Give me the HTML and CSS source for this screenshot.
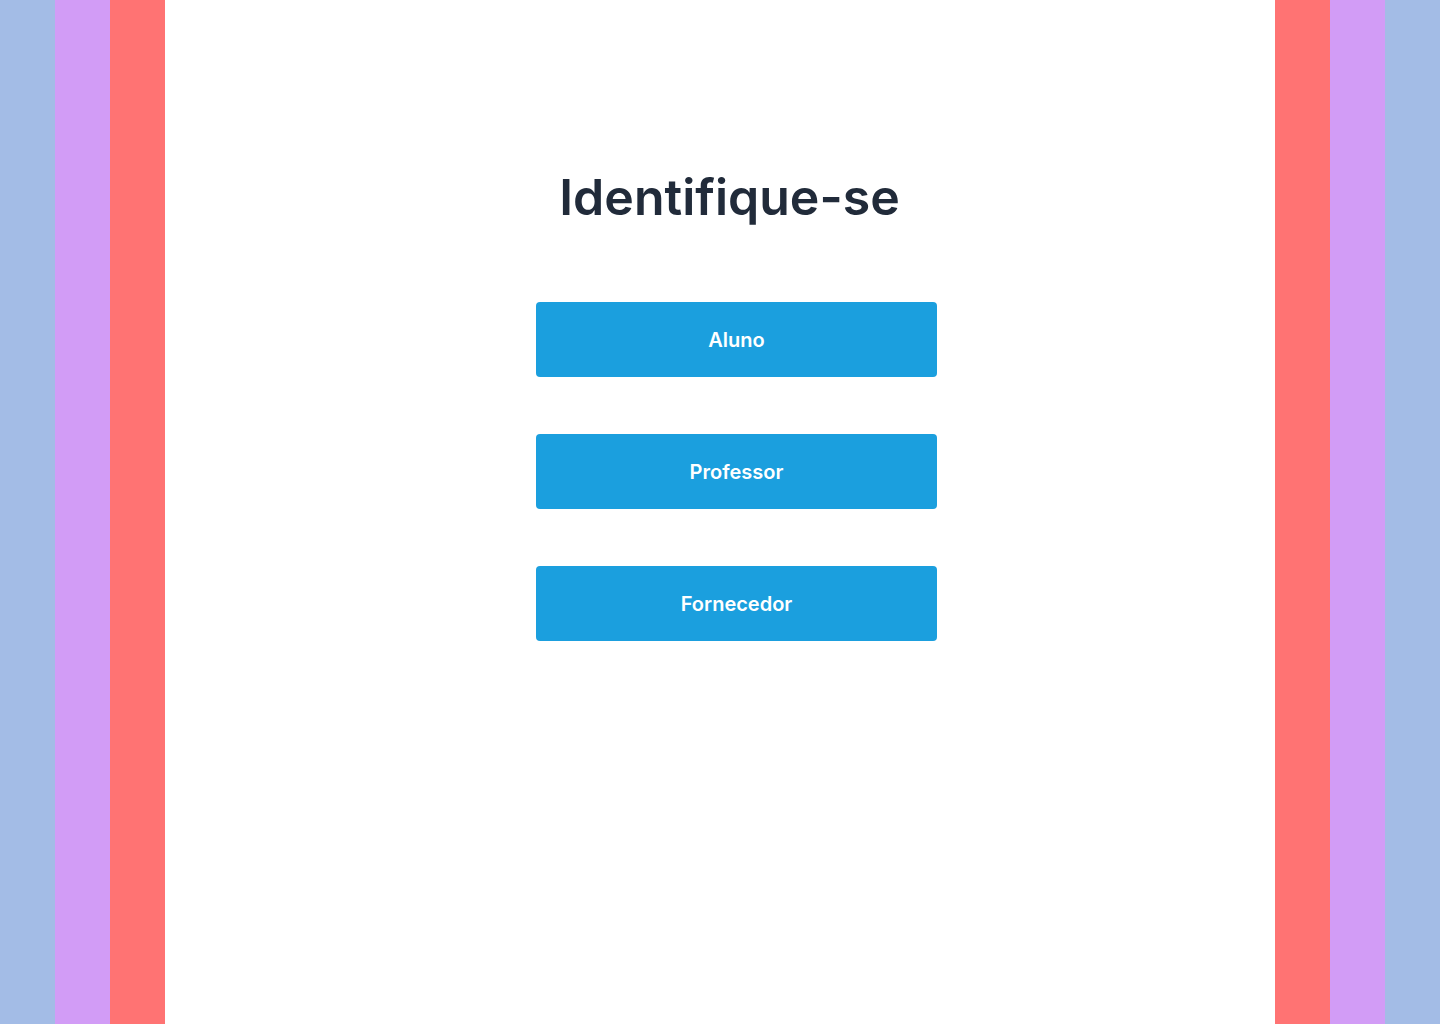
FILE: index.html
```html
<!DOCTYPE html>
<html lang="pt">
<head>
<meta charset="utf-8">
<title>Identifique-se</title>
<link rel="stylesheet" href="styles.css">
</head>
<body>
<div class="page">
  <div class="stripe stripe-blue"></div>
  <div class="stripe stripe-purple"></div>
  <div class="stripe stripe-red"></div>
  <main class="main">
    <h1 class="title">Identifique-se</h1>
    <div class="choices">
      <button class="choice" type="button">Aluno</button>
      <button class="choice" type="button">Professor</button>
      <button class="choice" type="button">Fornecedor</button>
    </div>
  </main>
  <div class="stripe stripe-red"></div>
  <div class="stripe stripe-purple"></div>
  <div class="stripe stripe-blue"></div>
</div>
</body>
</html>
```
FILE: styles.css
```css
html, body {
  margin: 0;
  padding: 0;
  height: 100%;
  background: #ffffff;
  font-family: Inter, "Noto Sans", "Liberation Sans", sans-serif;
}

.page {
  display: flex;
  min-height: 1024px;
}

.stripe {
  width: 55px;
  flex: 0 0 55px;
}

.stripe-blue { background: #a3bce6; }
.stripe-purple { background: #d29cf6; }
.stripe-red { background: #ff7373; }

.main {
  flex: 1;
  display: flex;
  flex-direction: column;
  align-items: center;
  padding-top: 167px;
  background: #ffffff;
}

.title {
  margin: 0;
  padding-left: 19px;
  font-size: 50px;
  line-height: 60px;
  font-weight: 600;
  color: #212b3a;
  letter-spacing: 0;
}

.choices {
  margin-top: 75px;
  margin-left: 33px;
  width: 401px;
  display: flex;
  flex-direction: column;
  gap: 57px;
}

.choice {
  height: 75px;
  border: none;
  border-radius: 4px;
  background: #1b9fde;
  color: #ffffff;
  font-family: inherit;
  font-size: 20px;
  font-weight: 600;
  cursor: pointer;
  padding: 0;
}
```
